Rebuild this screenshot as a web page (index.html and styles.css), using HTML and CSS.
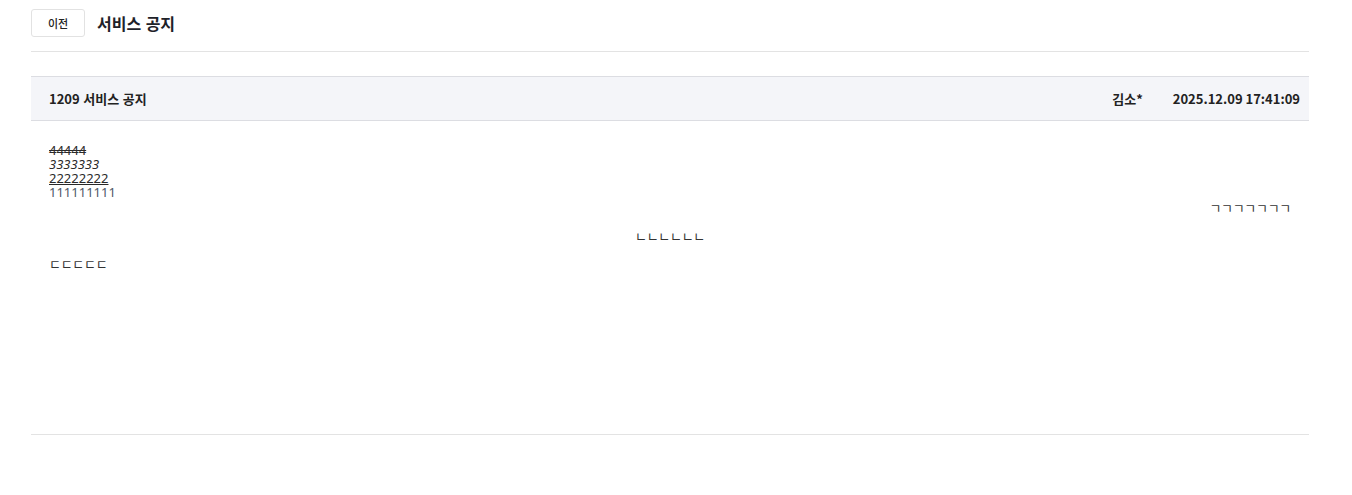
FILE: index.html
```html
<!DOCTYPE html>
<html lang="ko">
<head>
<meta charset="utf-8">
<link rel="stylesheet" href="styles.css">
</head>
<body>
<div class="page">
  <div class="top">
    <button class="back">이전</button>
    <h1 class="title">서비스 공지</h1>
  </div>
  <div class="board">
    <div class="head">
      <div class="subject">1209 서비스 공지</div>
      <div class="meta">
        <span class="writer">김소*</span>
        <span class="date">2025.12.09 17:41:09</span>
      </div>
    </div>
    <div class="body">
      <div class="lines">
        <div class="strike">44444</div>
        <div class="italic">3333333</div>
        <div class="under">22222222</div>
        <div class="plain">111111111</div>
      </div>
      <p class="jamo right">ㄱㄱㄱㄱㄱㄱㄱ</p>
      <p class="jamo center">ㄴㄴㄴㄴㄴㄴ</p>
      <p class="jamo left">ㄷㄷㄷㄷㄷ</p>
    </div>
  </div>
</div>
</body>
</html>
```
FILE: styles.css
```css
html, body { margin: 0; padding: 0; background: #fff; }
body { font-family: "Noto Sans CJK KR", "Noto Sans", sans-serif; color: #222; }
.page { width: 1278px; margin-left: 31px; }
.top { display: flex; align-items: center; gap: 12px; height: 52px; border-bottom: 1px solid #e3e3e3; box-sizing: border-box; padding-bottom: 6px; }
.back { width: 54px; height: 28px; border: 1px solid #e2e2e2; border-radius: 3px; background: #fff; font-family: "Noto Sans CJK KR", sans-serif; font-size: 11px; font-weight: 500; color: #222; padding: 0; }
.title { margin: 0; font-size: 16px; font-weight: 700; color: #1e2229; }
.board { margin-top: 24px; border-bottom: 1px solid #e3e3e3; height: 358px; }
.head { display: flex; justify-content: space-between; align-items: center; height: 45px; box-sizing: border-box; background: #f4f5f9; border-top: 1px solid #dcdde2; border-bottom: 1px solid #dcdde2; padding: 0 9px 0 18px; }
.subject, .meta { font-size: 13px; font-weight: 700; color: #222; }
.meta { display: flex; gap: 30px; }
.date { font-feature-settings: "calt" 0, "locl" 0; font-variant-ligatures: none; }
.body { padding: 22px 18px 0 18px; font-family: "Noto Sans", "Open Sans", sans-serif; font-size: 13px; color: #2a2a2a; }
.lines { line-height: 14px; }
.strike { text-decoration: line-through; }
.italic { font-style: italic; }
.under { text-decoration: underline; }
.plain { color: #4f5866; }
.jamo { margin: 0 0 10px; font-size: 13px; line-height: 18px; font-family: "Noto Sans CJK KR", sans-serif; color: #333; letter-spacing: -0.3px; }
.right { text-align: right; }
.center { text-align: center; }
.left { text-align: left; }
```
